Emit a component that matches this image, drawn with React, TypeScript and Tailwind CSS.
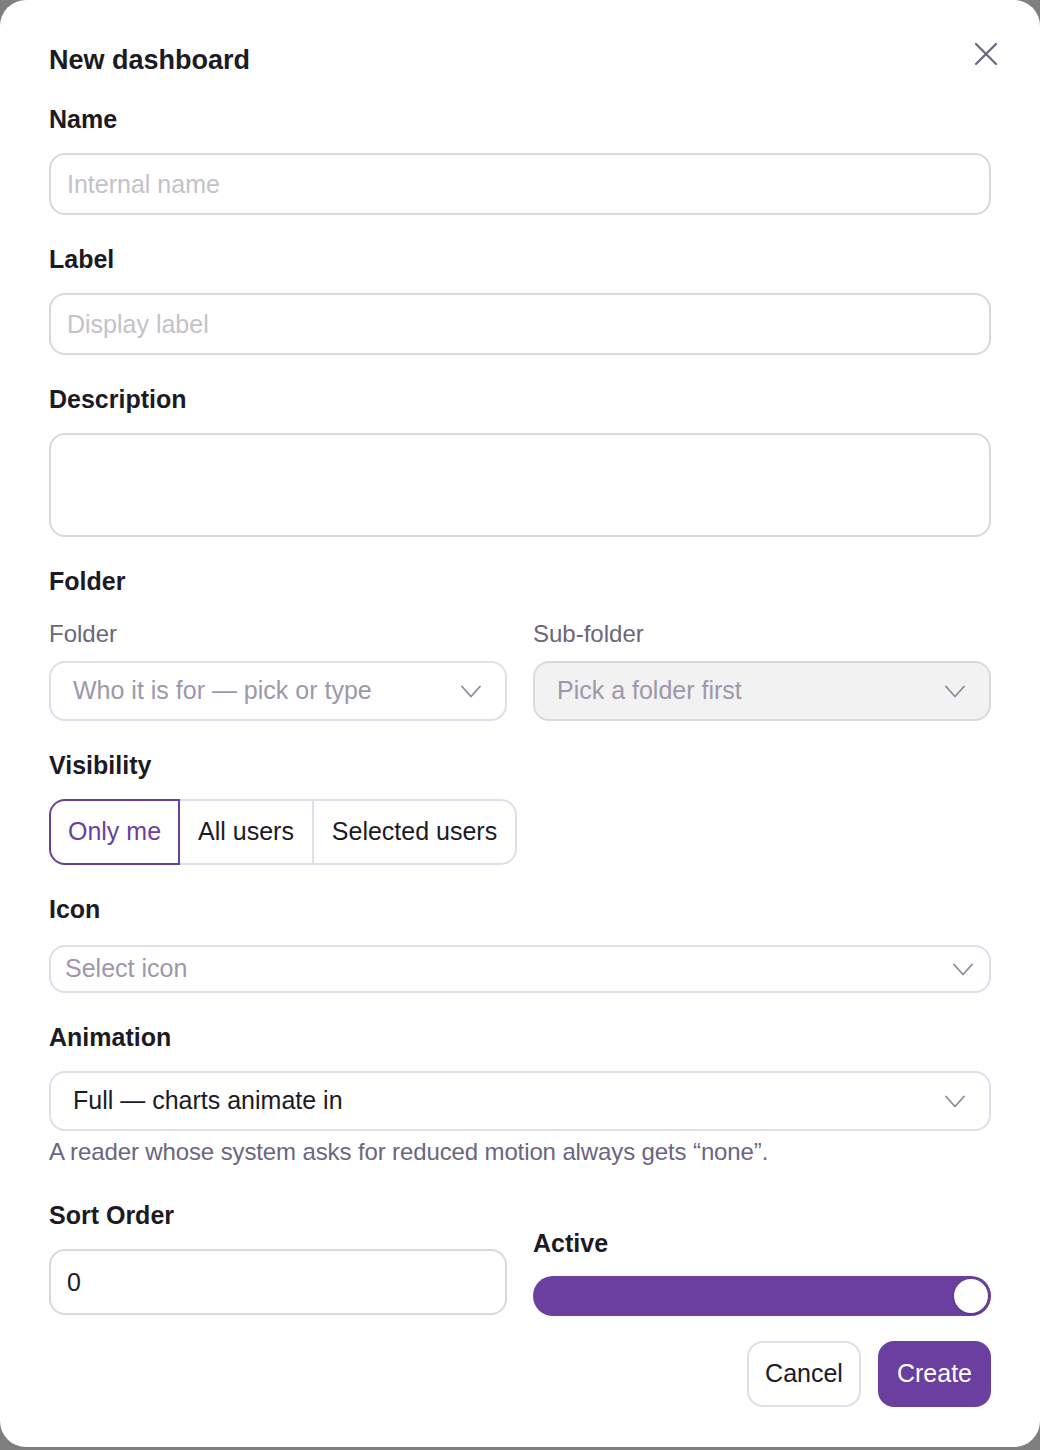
import React from 'react';

const labelCls = 'block text-[25px] leading-[30px] font-bold text-[#1c1a24]';
const inputCls =
  'block w-full rounded-[16px] border-2 border-[#d9d9dc] bg-white px-[16px] text-[25px] text-[#1c1a24] placeholder:text-[#c4c2c9] outline-none';

function Chevron() {
  return (
    <svg width="20" height="13" viewBox="0 0 20 13" fill="none" className="shrink-0">
      <polyline points="1,1.5 10,11.5 19,1.5" stroke="#8e8a9b" strokeWidth="1.8" strokeLinecap="round" strokeLinejoin="round" />
    </svg>
  );
}

function SelectBox({
  text,
  muted,
  disabled,
  className,
}: {
  text: string;
  muted?: boolean;
  disabled?: boolean;
  className?: string;
}) {
  return (
    <div
      className={`flex items-center justify-between rounded-[16px] border-2 ${
        disabled ? 'border-[#dadada] bg-[#f2f2f2]' : 'border-[#e0dee9] bg-white'
      } ${className ?? ''}`}
    >
      <span className={`text-[25px] ${muted ? 'text-[#9d98ab]' : 'text-[#1c1a24]'}`}>{text}</span>
      <Chevron />
    </div>
  );
}

export default function App() {
  return (
    <div className="min-h-[1450px] w-[1040px] bg-[#7f7f7f]" style={{ fontFamily: '"Liberation Sans", Arial, sans-serif' }}>
      <div className="relative h-[1447px] rounded-[26px] bg-white px-[49px] pt-[44px]">
        <button type="button" aria-label="Close" className="absolute right-[42px] top-[42px] p-0">
          <svg width="24" height="24" viewBox="0 0 24 24" fill="none">
            <path d="M2 2 L22 22 M22 2 L2 22" stroke="#6b6580" strokeWidth="2.2" strokeLinecap="round" />
          </svg>
        </button>

        <h2 className="text-[27px] leading-[32px] font-bold text-[#1c1a24]">New dashboard</h2>

        {/* Name */}
        <label className={`${labelCls} mt-[28px]`}>Name</label>
        <input className={`${inputCls} mt-[19px] h-[62px]`} placeholder="Internal name" />

        {/* Label */}
        <label className={`${labelCls} mt-[29px]`}>Label</label>
        <input className={`${inputCls} mt-[19px] h-[62px]`} placeholder="Display label" />

        {/* Description */}
        <label className={`${labelCls} mt-[29px]`}>Description</label>
        <textarea className={`${inputCls} mt-[19px] h-[104px] resize-none py-3`} />

        {/* Folder */}
        <div className={`${labelCls} mt-[29px]`}>Folder</div>
        <div className="mt-[23px] grid grid-cols-2 gap-x-[26px]">
          <div>
            <div className="text-[24px] leading-[30px] text-[#6b6580]">Folder</div>
            <SelectBox
              text="Who it is for — pick or type"
              muted
              className="mt-[12px] h-[60px] pl-[22px] pr-[24px]"
            />
          </div>
          <div>
            <div className="text-[24px] leading-[30px] text-[#6b6580]">Sub-folder</div>
            <SelectBox
              text="Pick a folder first"
              muted
              disabled
              className="mt-[12px] h-[60px] pl-[22px] pr-[24px]"
            />
          </div>
        </div>

        {/* Visibility */}
        <div className={`${labelCls} mt-[29px]`}>Visibility</div>
        <div className="mt-[19px] flex h-[66px] w-[468px]">
          <button
            type="button"
            className="flex w-[131px] items-center justify-center rounded-l-[16px] border-2 border-[#6b3fa0] text-[25px] text-[#6b3fa0]"
          >
            Only me
          </button>
          <button
            type="button"
            className="flex w-[134px] items-center justify-center border-y-2 border-r-2 border-[#e0dee9] text-[25px] text-[#1c1a24]"
          >
            All users
          </button>
          <button
            type="button"
            className="flex flex-1 items-center justify-center rounded-r-[16px] border-y-2 border-r-2 border-[#e0dee9] text-[25px] text-[#1c1a24]"
          >
            Selected users
          </button>
        </div>

        {/* Icon */}
        <div className={`${labelCls} mt-[29px]`}>Icon</div>
        <SelectBox text="Select icon" muted className="mt-[21px] h-[48px] pl-[14px] pr-[16px]" />

        {/* Animation */}
        <div className={`${labelCls} mt-[29px]`}>Animation</div>
        <SelectBox text="Full — charts animate in" className="mt-[19px] h-[60px] pl-[22px] pr-[24px]" />
        <p className="mt-[6px] text-[24px] leading-[30px] text-[#6b6580] tracking-[-0.005em]">
          A reader whose system asks for reduced motion always gets “none”.
        </p>

        {/* Sort order + Active */}
        <div className="mt-[33px] grid grid-cols-2 items-end gap-x-[26px]">
          <div>
            <label className={labelCls}>Sort Order</label>
            <input className={`${inputCls} mt-[19px] h-[66px]`} defaultValue="0" />
          </div>
          <div>
            <div className={labelCls}>Active</div>
            <div className="mb-[-1px] mt-[18px] flex h-[40px] items-center justify-end rounded-full bg-[#6b3fa0] px-[3px]">
              <span className="h-[34px] w-[34px] rounded-full bg-white shadow-[0_1px_3px_rgba(0,0,0,0.25)]" />
            </div>
          </div>
        </div>

        {/* Actions */}
        <div className="mt-[26px] flex justify-end gap-[17px]">
          <button
            type="button"
            className="h-[66px] w-[114px] rounded-[16px] border-2 border-[#e0dee9] bg-white text-[25px] text-[#1c1a24]"
          >
            Cancel
          </button>
          <button type="button" className="h-[66px] w-[113px] rounded-[16px] bg-[#6b3fa0] text-[25px] text-white">
            Create
          </button>
        </div>
      </div>
    </div>
  );
}
